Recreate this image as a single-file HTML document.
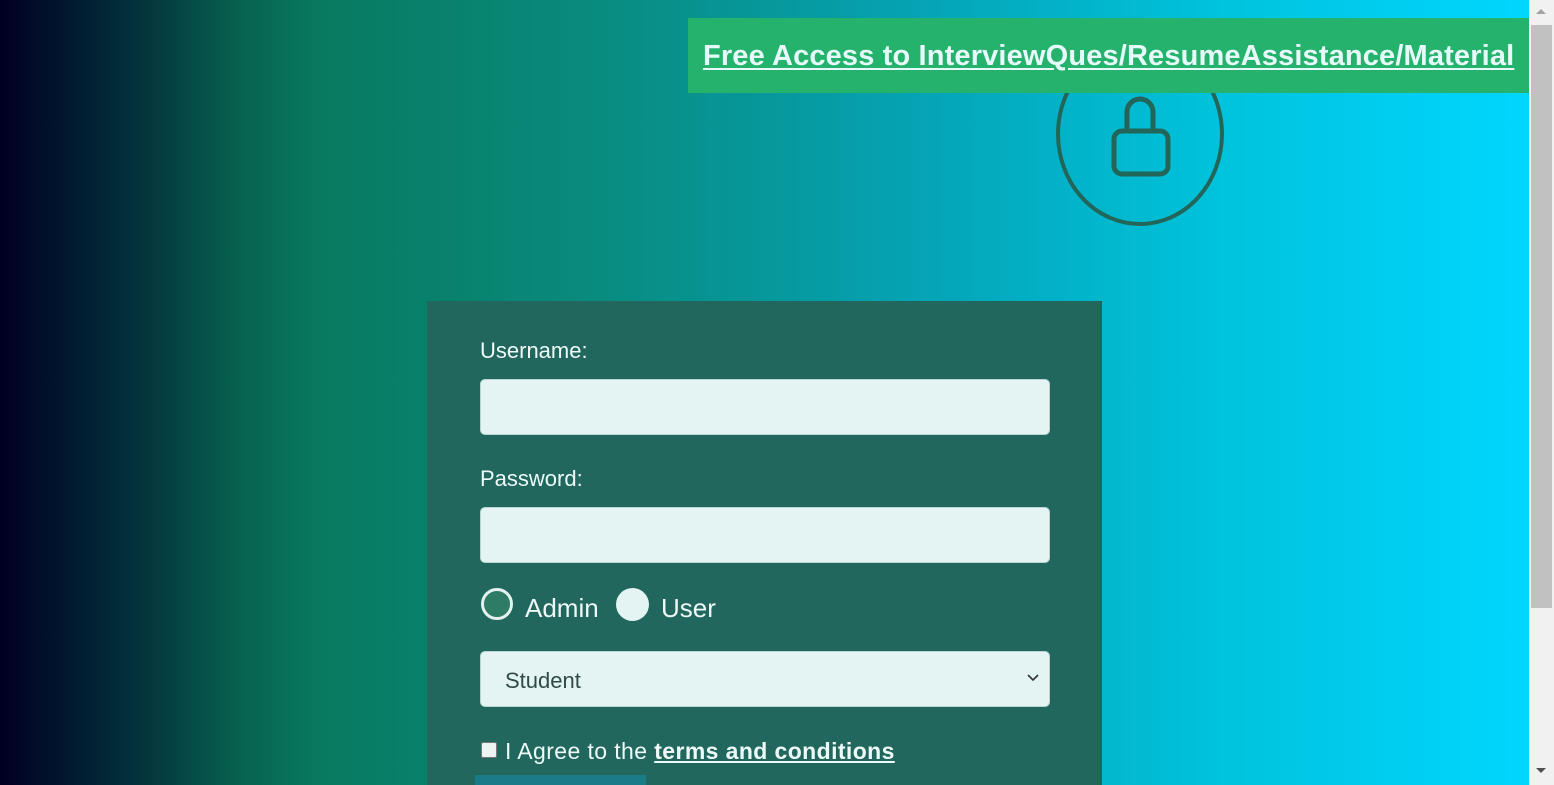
<!DOCTYPE html>
<html><head><style>
html,body{margin:0;padding:0;width:1554px;height:785px;overflow:hidden;font-family:"Liberation Sans",sans-serif}
.bg{position:absolute;left:0;top:0;width:1529px;height:785px;background:linear-gradient(90deg,#000022 0%,#03323c 9%,#07644f 16%,#087a60 21%,#098a7c 38%,#05a3b5 60%,#00c3dd 80%,#00d6ff 100%)}
.sb{position:absolute;left:1529px;top:0;width:25px;height:785px;background:#f1f1f1}
.thumb{position:absolute;left:1531px;top:25px;width:21px;height:583px;background:#c1c1c1}
.banner{position:absolute;left:688px;top:18px;width:841px;height:75px;background:#24b26c;box-sizing:border-box}
.banner a{position:absolute;left:15px;top:22px;color:#e6fafa;font-weight:bold;font-size:29px;text-decoration:underline;text-underline-offset:3px;letter-spacing:0.15px;white-space:nowrap}
.card{position:absolute;left:427px;top:301px;width:675px;height:484px;background:#21675e}
.lbl{position:absolute;left:53px;color:#eefaf8;font-size:22px}
.inp{position:absolute;left:53px;width:568px;height:54px;background:#e4f4f3;border:1px solid #b9d6d2;border-radius:5px}
.txt{color:#eef8f6;font-size:26px;position:absolute}
</style></head><body>
<div class="bg"></div>
<svg style="position:absolute;left:1055px;top:40px" width="170" height="190"><ellipse cx="85" cy="94" rx="82" ry="90" fill="none" stroke="#22665a" stroke-width="4"/><path d="M72 90 V72 a13 13 0 0 1 26 0 V90" fill="none" stroke="#22665a" stroke-width="5"/><rect x="59" y="91" width="54" height="43" rx="8" fill="none" stroke="#22665a" stroke-width="5"/></svg>
<div class="banner"><a>Free Access to InterviewQues/ResumeAssistance/Material</a></div>
<div class="card">
<div class="lbl" style="top:37px">Username:</div>
<div class="inp" style="top:78px"></div>
<div class="lbl" style="top:165px">Password:</div>
<div class="inp" style="top:206px"></div>
<div style="position:absolute;left:54px;top:287px;width:32px;height:32px;border-radius:50%;background:#2e7b66;border:3px solid #e4f1ee;box-sizing:border-box"></div>
<div class="txt" style="left:98px;top:292px">Admin</div>
<div style="position:absolute;left:189px;top:287px;width:33px;height:33px;border-radius:50%;background:#e4f4f3"></div>
<div class="txt" style="left:234px;top:292px">User</div>
<div class="inp" style="top:350px"><span style="position:absolute;left:24px;top:16px;font-size:22px;color:#2f4a47">Student</span><svg style="position:absolute;right:10px;top:21px" width="12" height="10"><path d="M1 2 L6 7 L11 2" fill="none" stroke="#333" stroke-width="1.6"/></svg></div>
<div style="position:absolute;left:54px;top:441px;width:14px;height:14px;background:#eef4f2;border:1px solid #777;border-radius:2px"></div>
<div style="position:absolute;left:78px;top:437px;color:#eefaf8;font-size:23px;white-space:nowrap;letter-spacing:0.4px">I Agree to the <b style="text-decoration:underline">terms and conditions</b></div>
<div style="position:absolute;left:48px;top:474px;width:171px;height:10px;background:#1a7c86"></div>
</div>
<div class="sb"></div><div class="thumb"></div>
<svg style="position:absolute;left:1534px;top:6px" width="14" height="10"><path d="M2 8 L7 3 L12 8Z" fill="#a3a3a3"/></svg>
<svg style="position:absolute;left:1534px;top:766px" width="14" height="10"><path d="M2 2 L7 7 L12 2Z" fill="#505050"/></svg>
</body></html>
